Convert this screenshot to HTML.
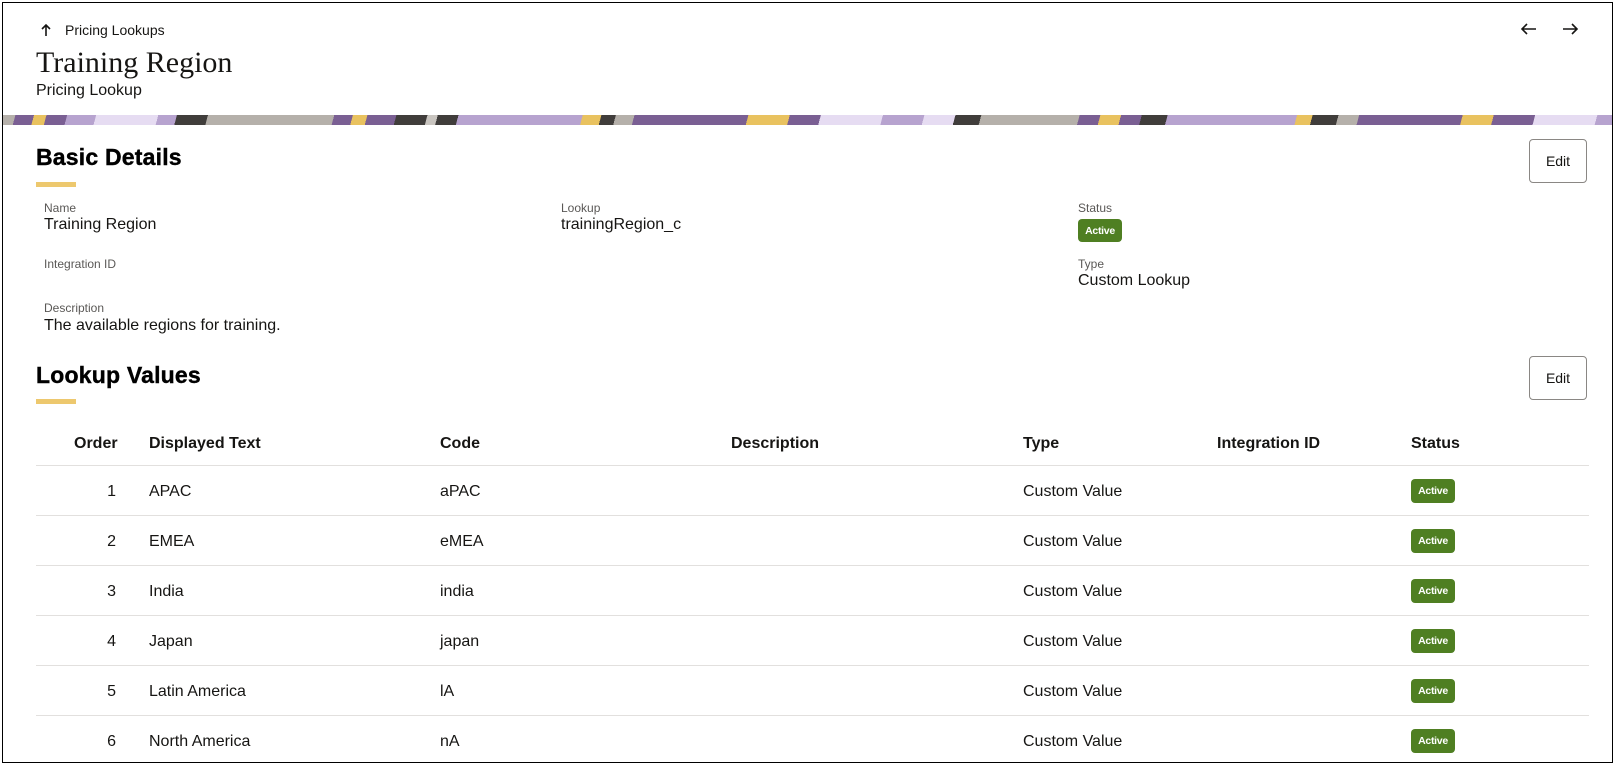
<!DOCTYPE html>
<html><head><meta charset="utf-8">
<style>
*{margin:0;padding:0;box-sizing:border-box}
body{width:1614px;height:766px;background:#fff;font-family:"Liberation Sans",sans-serif;color:#161513;position:relative;overflow:hidden}
.frame{position:absolute;left:2px;top:2px;width:1611px;height:761px;border:1px solid #000}
.a{position:absolute;white-space:nowrap}
.lbl{font-size:12px;color:#5a5856}
.val{font-size:16px;color:#161513}
.h2{font-size:23px;font-weight:bold;letter-spacing:0.2px;color:#000;-webkit-text-stroke:0.4px #000}
.ul{position:absolute;width:40px;height:5px;background:#edc86e}
.btn{position:absolute;left:1529px;width:58px;height:44px;border:1px solid #8a8784;border-radius:4px;font-size:14px;display:flex;align-items:center;justify-content:center;background:#fff}
.badge{position:absolute;width:44px;height:24px;background:#4f7f22;border-radius:4px;color:#fff;font-size:10.5px;font-weight:bold;display:flex;align-items:center;justify-content:center;letter-spacing:-0.3px}
.th{position:absolute;top:435px;font-size:16px;font-weight:bold;color:#161513}
.line{position:absolute;left:36px;width:1553px;height:1px;background:#e2e0de}
.cell{position:absolute;font-size:16px}
.banner{position:absolute;left:3px;top:115px;width:1609px;height:10px;
background:linear-gradient(105deg,
#b5b0aa 0 12px,#7a5f93 12px 30px,#e9c25f 30px 42px,#7a5f93 42px 62px,#b7a3cf 62px 90px,#e6dcf2 90px 150px,#b7a3cf 150px 168px,#403d3b 168px 198px,#b5b0aa 198px 320px,#7a5f93 320px 338px,#e9c25f 338px 352px,#7a5f93 352px 380px,#403d3b 380px 410px,#c9c5c0 410px 420px,#403d3b 420px 440px,#b7a3cf 440px 560px,#e9c25f 560px 578px,#403d3b 578px 592px,#b5b0aa 592px 610px,#7a5f93 610px 720px,#e9c25f 720px 760px,#7a5f93 760px 790px,#e6dcf2 790px 850px,#b7a3cf 850px 890px,#e6dcf2 890px 920px,#403d3b 920px 945px,#b5b0aa 945px 1040px,#7a5f93 1040px 1060px,#e9c25f 1060px 1080px,#7a5f93 1080px 1100px,#403d3b 1100px 1125px,#b7a3cf 1125px 1250px,#e9c25f 1250px 1265px,#403d3b 1265px 1290px,#b5b0aa 1290px 1310px,#7a5f93 1310px 1410px,#e9c25f 1410px 1440px,#7a5f93 1440px 1480px,#e6dcf2 1480px 1540px,#b7a3cf 1540px 1575px,#7a5f93 1575px 1590px,#b7a3cf 1590px 1609px)}
</style></head><body>
<div class="frame"></div>

<svg class="a" style="left:40px;top:23px" width="12" height="14" viewBox="0 0 12 14"><path d="M6 13V2M2 6l4-4 4 4" stroke="#161513" stroke-width="1.6" fill="none"/></svg>
<div class="a" style="left:65px;top:22px;font-size:14px">Pricing Lookups</div>
<div class="a" style="left:36px;top:46px;font-family:'Liberation Serif',serif;font-size:30px">Training Region</div>
<div class="a" style="left:36px;top:82px;font-size:16px">Pricing Lookup</div>

<svg class="a" style="left:1519px;top:22px" width="20" height="14" viewBox="0 0 20 14"><path d="M17 7H3M8 2L3 7l5 5" stroke="#161513" stroke-width="1.6" fill="none"/></svg>
<svg class="a" style="left:1560px;top:22px" width="20" height="14" viewBox="0 0 20 14"><path d="M3 7h14M12 2l5 5-5 5" stroke="#161513" stroke-width="1.6" fill="none"/></svg>

<div class="banner"></div>

<div class="a h2" style="left:36px;top:144px">Basic Details</div>
<div class="ul" style="left:36px;top:182px"></div>
<div class="btn" style="top:139px">Edit</div>

<div class="a lbl" style="left:44px;top:201px">Name</div>
<div class="a val" style="left:44px;top:216px">Training Region</div>
<div class="a lbl" style="left:561px;top:201px">Lookup</div>
<div class="a val" style="left:561px;top:216px">trainingRegion_c</div>
<div class="a lbl" style="left:1078px;top:201px">Status</div>
<div class="badge" style="left:1078px;top:219px;height:23px">Active</div>
<div class="a lbl" style="left:44px;top:257px">Integration ID</div>
<div class="a lbl" style="left:1078px;top:257px">Type</div>
<div class="a val" style="left:1078px;top:272px">Custom Lookup</div>
<div class="a lbl" style="left:44px;top:301px">Description</div>
<div class="a val" style="left:44px;top:317px">The available regions for training.</div>

<div class="a h2" style="left:36px;top:362px">Lookup Values</div>
<div class="ul" style="left:36px;top:399px"></div>
<div class="btn" style="top:356px">Edit</div>

<div class="th" style="left:74px">Order</div>
<div class="th" style="left:149px">Displayed Text</div>
<div class="th" style="left:440px">Code</div>
<div class="th" style="left:731px">Description</div>
<div class="th" style="left:1023px">Type</div>
<div class="th" style="left:1217px">Integration ID</div>
<div class="th" style="left:1411px">Status</div>
<div class="line" style="top:465px"></div>

<div class="line" style="top:515px"></div>
<div class="line" style="top:565px"></div>
<div class="line" style="top:615px"></div>
<div class="line" style="top:665px"></div>
<div class="line" style="top:715px"></div>

<div class="cell" style="left:96px;width:20px;text-align:right;top:483px">1</div>
<div class="cell" style="left:149px;top:483px">APAC</div>
<div class="cell" style="left:440px;top:483px">aPAC</div>
<div class="cell" style="left:1023px;top:483px">Custom Value</div>
<div class="badge" style="left:1411px;top:479px">Active</div>

<div class="cell" style="left:96px;width:20px;text-align:right;top:533px">2</div>
<div class="cell" style="left:149px;top:533px">EMEA</div>
<div class="cell" style="left:440px;top:533px">eMEA</div>
<div class="cell" style="left:1023px;top:533px">Custom Value</div>
<div class="badge" style="left:1411px;top:529px">Active</div>

<div class="cell" style="left:96px;width:20px;text-align:right;top:583px">3</div>
<div class="cell" style="left:149px;top:583px">India</div>
<div class="cell" style="left:440px;top:583px">india</div>
<div class="cell" style="left:1023px;top:583px">Custom Value</div>
<div class="badge" style="left:1411px;top:579px">Active</div>

<div class="cell" style="left:96px;width:20px;text-align:right;top:633px">4</div>
<div class="cell" style="left:149px;top:633px">Japan</div>
<div class="cell" style="left:440px;top:633px">japan</div>
<div class="cell" style="left:1023px;top:633px">Custom Value</div>
<div class="badge" style="left:1411px;top:629px">Active</div>

<div class="cell" style="left:96px;width:20px;text-align:right;top:683px">5</div>
<div class="cell" style="left:149px;top:683px">Latin America</div>
<div class="cell" style="left:440px;top:683px">lA</div>
<div class="cell" style="left:1023px;top:683px">Custom Value</div>
<div class="badge" style="left:1411px;top:679px">Active</div>

<div class="cell" style="left:96px;width:20px;text-align:right;top:733px">6</div>
<div class="cell" style="left:149px;top:733px">North America</div>
<div class="cell" style="left:440px;top:733px">nA</div>
<div class="cell" style="left:1023px;top:733px">Custom Value</div>
<div class="badge" style="left:1411px;top:729px">Active</div>
</body></html>
